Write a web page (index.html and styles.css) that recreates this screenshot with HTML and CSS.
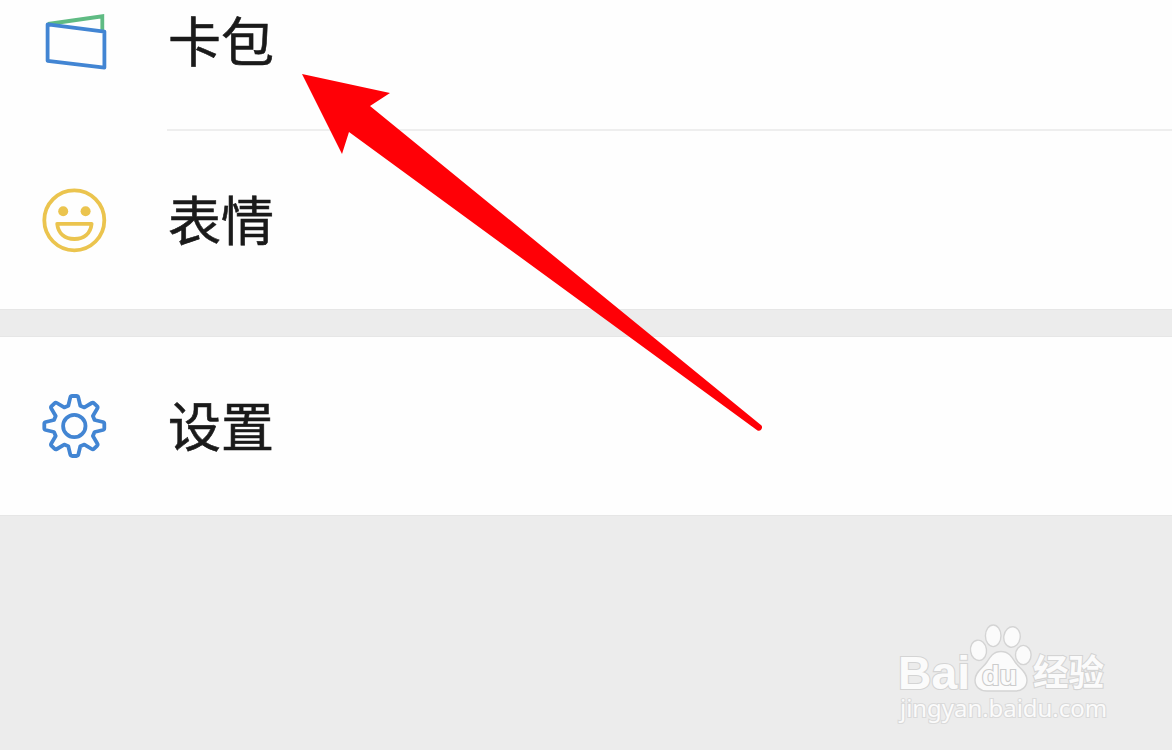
FILE: index.html
```html
<!DOCTYPE html>
<html lang="zh-CN">
<head>
  <meta charset="UTF-8">
  <meta name="viewport" content="width=device-width, initial-scale=1">
  <title>设置</title>
  <link rel="stylesheet" href="styles.css">
</head>

<body>
  <div class="page">
    <div class="group">
      <div class="row row-first">
        <svg class="icon" viewBox="0 0 72 72">
          <path class="line green" d="M10 18 L64.3 10.3 V26"/>
          <path class="line blue" d="M9.6 18.4 L66.4 25.6 V61.6 L9.6 54.8 Z"/>
        </svg>
        <span class="label">卡包</span>
      </div>
      <div class="row divided">
        <svg class="icon" viewBox="0 0 72 72">
          <circle class="line yellow" cx="36.3" cy="36.3" r="30"/>
          <circle class="eye" cx="25.2" cy="27.3" r="5"/>
          <circle class="eye" cx="47.6" cy="27.3" r="5"/>
          <path class="line yellow" d="M19.2 39.8 H53.6 C52.6 49.5 46 55 36.4 55 C26.8 55 20.2 49.5 19.2 39.8 Z"/>
        </svg>
        <span class="label">表情</span>
      </div>
    </div>

    <div class="group">
      <div class="row">
        <svg class="icon" viewBox="-36.3 -36 72 72">
          <path class="line blue" d="M-6 -20.3 L-4 -28.6 Q-3.6 -30 -2.2 -30 H2.2 Q3.6 -30 4 -28.6 L6 -20.3 L10.1 -18.6 L17.4 -23 Q18.7 -23.8 19.8 -22.7 L22.7 -19.8 Q23.8 -18.7 23 -17.4 L18.6 -10.1 L20.3 -6 L28.6 -4 Q30 -3.6 30 -2.2 V2.2 Q30 3.6 28.6 4 L20.3 6 L18.6 10.1 L23 17.4 Q23.8 18.7 22.7 19.8 L19.8 22.7 Q18.7 23.8 17.4 23 L10.1 18.6 L6 20.3 L4 28.6 Q3.6 30 2.2 30 H-2.2 Q-3.6 30 -4 28.6 L-6 20.3 L-10.1 18.6 L-17.4 23 Q-18.7 23.8 -19.8 22.7 L-22.7 19.8 Q-23.8 18.7 -23 17.4 L-18.6 10.1 L-20.3 6 L-28.6 4 Q-30 3.6 -30 2.2 V-2.2 Q-30 -3.6 -28.6 -4 L-20.3 -6 L-18.6 -10.1 L-23 -17.4 Q-23.8 -18.7 -22.7 -19.8 L-19.8 -22.7 Q-18.7 -23.8 -17.4 -23 L-10.1 -18.6 Z"/>
          <circle class="line blue" cx="0" cy="0" r="11.2"/>
        </svg>
        <span class="label">设置</span>
      </div>
    </div>

    <svg class="arrow" viewBox="0 0 464 362">
      <path d="M0 0 L88 19 L68 32 L459.5 351.5 A3.4 3.4 0 0 1 455.5 356.5 L47 58 L40 80 Z"/>
    </svg>

    <svg class="watermark" viewBox="0 0 240 120">
      <text class="wm-bold" x="13" y="73.5" font-size="46" textLength="72" lengthAdjust="spacingAndGlyphs">Bai</text>
      <ellipse cx="93.5" cy="35.3" rx="8" ry="10.2" transform="rotate(-8 93.5 35.3)"/>
      <ellipse cx="108.2" cy="20.8" rx="7.8" ry="10.8"/>
      <ellipse cx="127" cy="22" rx="8.2" ry="10.3" transform="rotate(8 127 22)"/>
      <ellipse cx="138.3" cy="40" rx="7.8" ry="9.6"/>
      <path d="M116 36.5 C124 36.5 127 42 130 47 C134 53 142 56.5 142 65 C142 72 137 76 130 76 H102 C95 76 90 72 90 65 C90 56.5 98 53 102 47 C105 42 108 36.5 116 36.5 Z"/>
      <text class="wm-du" x="97" y="69.5" font-size="27" textLength="35" lengthAdjust="spacingAndGlyphs">du</text>
      <text class="wm-cn" x="148" y="71" font-size="36" textLength="71" lengthAdjust="spacingAndGlyphs">经验</text>
      <text class="wm-url" x="15" y="101.5" font-size="24" textLength="207" lengthAdjust="spacingAndGlyphs">jingyan.baidu.com</text>
    </svg>
  </div>
</body>
</html>
```
FILE: styles.css
```css
body {
  margin: 0;
  background: #ececec;
  font-family: "Noto Sans CJK SC", sans-serif;
}
.page {
  position: relative;
  height: 750px;
  overflow: hidden;
  display: flex;
  flex-direction: column;
  gap: 28px;
}
.group {
  background: #fefefe;
  box-shadow: 0 0 0 1px #e6e6e6;
}
.row {
  box-sizing: border-box;
  height: 178px;
  padding-left: 38px;
  display: flex;
  align-items: center;
  gap: 58px;
  position: relative;
}
/* the list is scrolled, so the first row is cut off at the top */
.row-first {
  height: 131px;
  padding-bottom: 48px;
}
.divided::before {
  content: "";
  position: absolute;
  top: -2px;
  left: 167px;
  right: 0;
  height: 2px;
  background: #eeeeee;
}
.icon {
  width: 72px;
  height: 72px;
  flex: none;
}
.line {
  fill: none;
  stroke-width: 3.8;
  stroke-linejoin: round;
  stroke-linecap: round;
}
.blue {
  stroke: #4285d3;
}
.green {
  stroke: #5fbb83;
  stroke-linejoin: miter;
  stroke-linecap: butt;
}
.yellow {
  stroke: #ebc44e;
}
.eye {
  fill: #ebc44e;
}
.label {
  font-size: 53px;
  line-height: 72px;
  padding-bottom: 5px;
  color: #1a1a1a;
  -webkit-text-stroke: 0.6px #1a1a1a;
}
.arrow {
  position: absolute;
  left: 302px;
  top: 74px;
  width: 464px;
  height: 362px;
  fill: #ff0006;
}
.watermark {
  position: absolute;
  left: 885px;
  top: 615px;
  width: 240px;
  height: 120px;
  fill: #fbfbfb;
  stroke: #d4d4d4;
  stroke-width: 1.4;
}
.watermark text {
  paint-order: stroke;
  stroke-width: 2.2;
}
.wm-bold {
  font-family: "Liberation Sans", sans-serif;
  font-weight: 700;
}
.watermark .wm-du {
  font-family: "Liberation Sans", sans-serif;
  font-weight: 700;
  stroke: #cccccc;
}
.wm-cn {
  font-weight: 700;
}
.watermark .wm-url {
  font-family: "Noto Sans", sans-serif;
  stroke: #dadada;
}
```
